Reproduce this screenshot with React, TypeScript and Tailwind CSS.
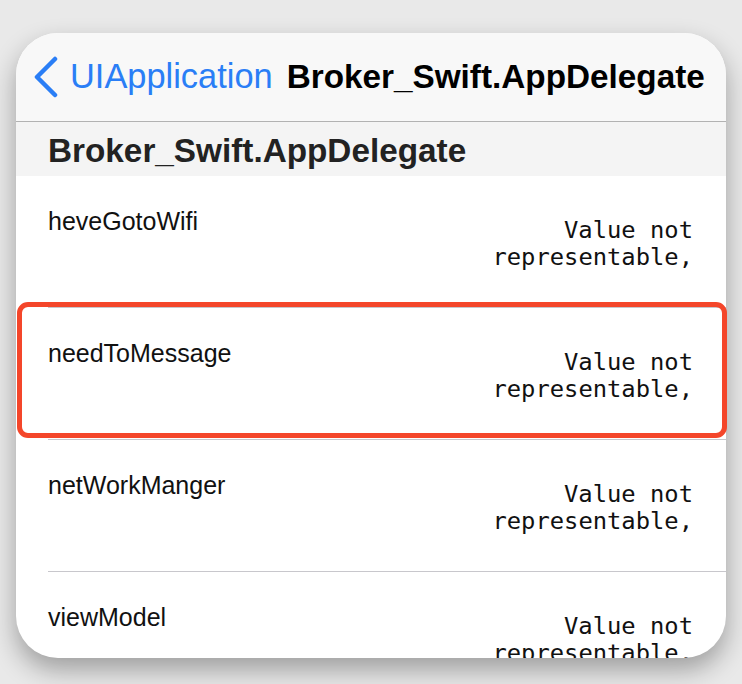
import React from 'react';

const rows = ['heveGotoWifi', 'needToMessage', 'netWorkManger', 'viewModel'];

const sans = "font-['Liberation_Sans',Arial,sans-serif]";
const mono = "font-['DejaVu_Sans_Mono',Menlo,monospace]";

const Row: React.FC<{ name: string }> = ({ name }) => (
  <div className="flex h-[132px] shrink-0 pl-[32px]">
    <div className="flex flex-1 border-b border-[#c8c7cc] pr-[33px]">
      <div className={`${sans} self-start pt-[31px] text-[25px] leading-[28px] text-[#111]`}>{name}</div>
      <div className={`${mono} ml-auto mt-[4px] self-center text-right text-[23.8px] leading-[27px] text-[#111]`}>
        Value not
        <br />
        representable,
      </div>
    </div>
  </div>
);

const App: React.FC = () => {
  return (
    <div className="relative h-[684px] w-[742px] overflow-hidden bg-[#e9e9e9] pl-[16px] pt-[33px]">
      <div className="flex h-[625px] w-[710px] flex-col overflow-hidden rounded-[42px] bg-white shadow-[0_12px_26px_rgba(0,0,0,0.32)]">
        {/* nav bar */}
        <div className="flex h-[89px] shrink-0 items-center border-b border-[#b2b2b2] bg-[#f8f8f8] pl-[17px]">
          <svg width="26" height="42" viewBox="0 0 26 42" className="shrink-0">
            <polyline
              points="22,3 4,21 22,39"
              fill="none"
              stroke="#2a7ef6"
              strokeWidth="4.5"
              strokeLinecap="round"
              strokeLinejoin="round"
            />
          </svg>
          <span className={`${sans} ml-[11px] text-[34.4px] text-[#2a7ef6]`}>UIApplication</span>
          <span className={`${sans} ml-[14px] text-[33.3px] font-bold text-black`}>Broker_Swift.AppDelegate</span>
        </div>

        {/* section header */}
        <div className="flex h-[54px] shrink-0 items-center bg-[#f4f4f4] pl-[32px] pt-[3px]">
          <span className={`${sans} text-[33.3px] font-bold text-[#222]`}>Broker_Swift.AppDelegate</span>
        </div>

        {rows.map((r) => (
          <Row key={r} name={r} />
        ))}
      </div>

      {/* highlight annotation */}
      <div className="absolute left-[17px] top-[302px] h-[136px] w-[710px] rounded-[11px] border-[5px] border-[#f4462a]" />
    </div>
  );
};

export default App;
